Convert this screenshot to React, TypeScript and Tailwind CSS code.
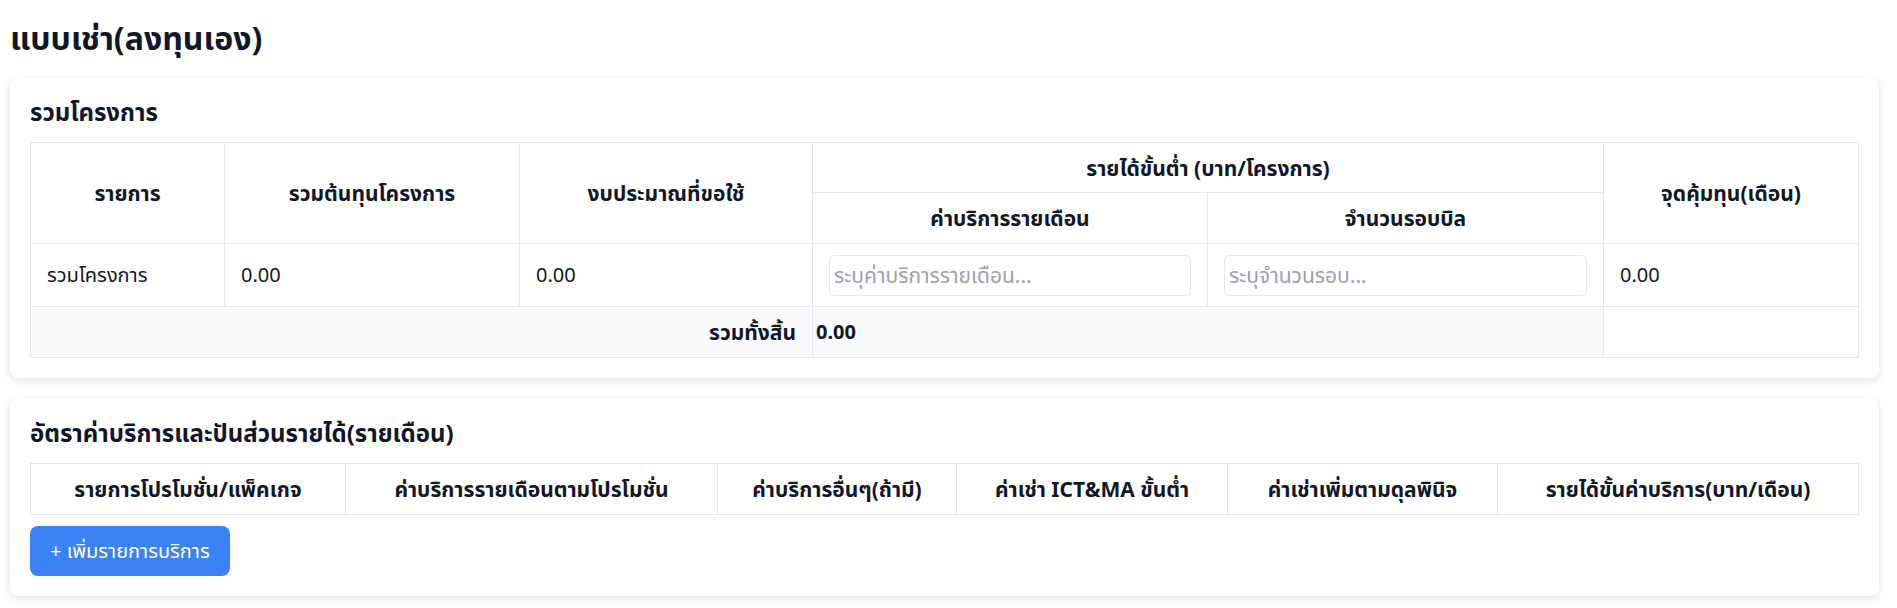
const font = { fontFamily: '"Noto Sans", "Noto Sans Thai", "Leelawadee UI", Tahoma, sans-serif' }

const th = 'border border-gray-200 px-4 text-center text-[21px] leading-7 font-bold text-gray-900'
const td = 'border border-gray-200 px-4 text-[20px] leading-7 text-gray-900'
const inputCls =
	'h-[41px] w-full rounded-md border border-gray-200 px-1 text-[21px] text-gray-900 placeholder:text-gray-400 outline-none'

const SummaryTable = () => {
	return (
		<table className="w-full table-fixed border-collapse border border-gray-200">
			<colgroup>
				<col className="w-[194px]" />
				<col className="w-[295px]" />
				<col className="w-[293px]" />
				<col className="w-[395px]" />
				<col className="w-[396px]" />
				<col className="w-[255px]" />
			</colgroup>
			<thead>
				<tr className="h-[50px]">
					<th rowSpan={2} className={th}>รายการ</th>
					<th rowSpan={2} className={th}>รวมต้นทุนโครงการ</th>
					<th rowSpan={2} className={th}>งบประมาณที่ขอใช้</th>
					<th colSpan={2} className={th}>รายได้ขั้นต่ำ (บาท/โครงการ)</th>
					<th rowSpan={2} className={th}>จุดคุ้มทุน(เดือน)</th>
				</tr>
				<tr className="h-[51px]">
					<th className={th}>ค่าบริการรายเดือน</th>
					<th className={th}>จำนวนรอบบิล</th>
				</tr>
			</thead>
			<tbody>
				<tr className="h-[63px]">
					<td className={td}>รวมโครงการ</td>
					<td className={td}>0.00</td>
					<td className={td}>0.00</td>
					<td className={td}>
						<input placeholder="ระบุค่าบริการรายเดือน..." className={inputCls} style={font} />
					</td>
					<td className={td}>
						<input placeholder="ระบุจำนวนรอบ..." className={inputCls} style={font} />
					</td>
					<td className={td}>0.00</td>
				</tr>
				<tr className="h-[51px]">
					<td
						colSpan={3}
						className="border border-gray-200 bg-gray-50 pr-4 text-right text-[21px] leading-7 font-bold text-gray-900"
					>
						รวมทั้งสิ้น
					</td>
					<td
						colSpan={2}
						className="border border-gray-200 bg-gray-50 pl-[3px] text-[20px] leading-7 font-bold text-gray-900"
					>
						0.00
					</td>
				</tr>
			</tbody>
		</table>
	)
}

const RateTable = () => {
	const headers = [
		'รายการโปรโมชั่น/แพ็คเกจ',
		'ค่าบริการรายเดือนตามโปรโมชั่น',
		'ค่าบริการอื่นๆ(ถ้ามี)',
		'ค่าเช่า ICT&MA ขั้นต่ำ',
		'ค่าเช่าเพิ่มตามดุลพินิจ',
		'รายได้ขั้นค่าบริการ(บาท/เดือน)'
	]
	return (
		<table className="w-full table-fixed border-collapse border border-gray-200">
			<colgroup>
				<col className="w-[315px]" />
				<col className="w-[372px]" />
				<col className="w-[239px]" />
				<col className="w-[271px]" />
				<col className="w-[270px]" />
				<col className="w-[361px]" />
			</colgroup>
			<thead>
				<tr className="h-[51px]">
					{headers.map((h) => (
						<th key={h} className={th}>
							{h}
						</th>
					))}
				</tr>
			</thead>
		</table>
	)
}

export default function App() {
	return (
		<div className="min-h-screen bg-white pl-2.5 pr-[18px] pt-[22px] pb-4" style={font}>
			<h1 className="mb-6 text-[32px] font-bold leading-8 text-gray-900">แบบเช่า(ลงทุนเอง)</h1>

			<section className="mb-[21px] rounded-lg bg-white p-5 shadow-[0_2px_8px_rgba(0,0,0,0.12)]">
				<h3 className="mb-4 text-2xl font-bold leading-7 text-gray-900">รวมโครงการ</h3>
				<SummaryTable />
			</section>

			<section className="rounded-lg bg-white p-5 shadow-[0_2px_8px_rgba(0,0,0,0.12)]">
				<h3 className="mb-4 text-2xl font-bold leading-7 text-gray-900">
					อัตราค่าบริการและปันส่วนรายได้(รายเดือน)
				</h3>
				<RateTable />
				<button className="mt-[11px] h-[50px] rounded-lg bg-[#3b82f6] px-5 text-[20px] text-white">
					+ เพิ่มรายการบริการ
				</button>
			</section>
		</div>
	)
}
